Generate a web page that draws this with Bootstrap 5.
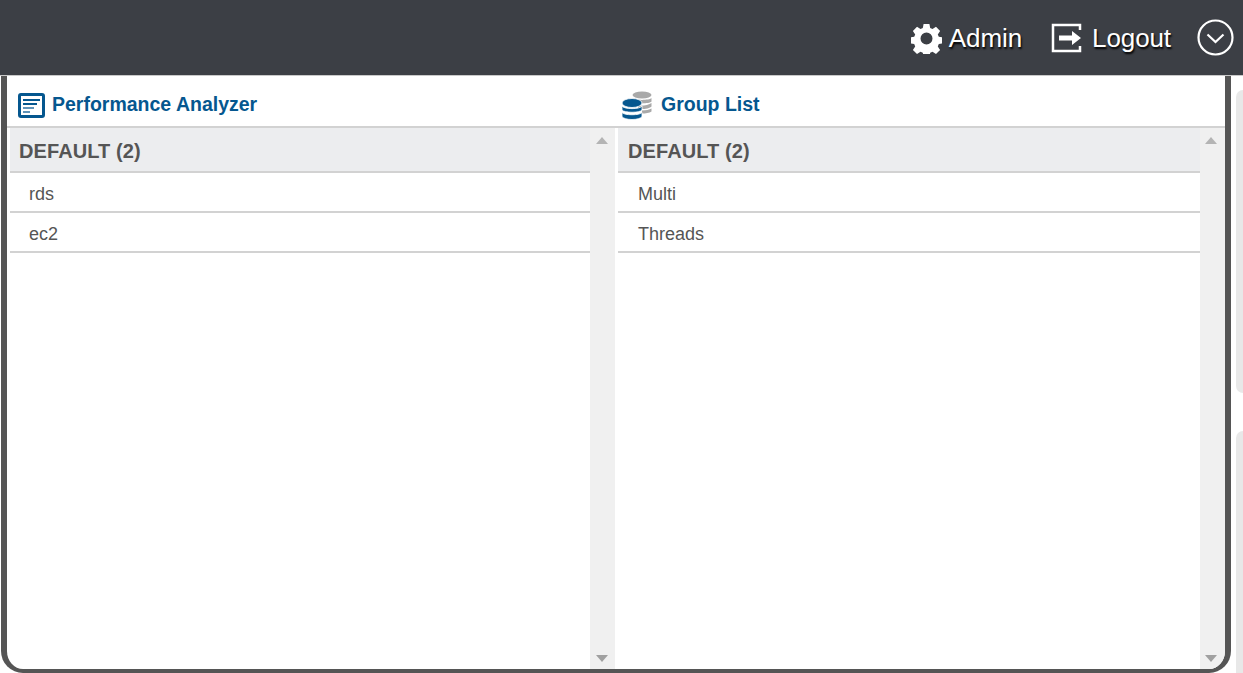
<!DOCTYPE html>
<html lang="en">
<head>
<meta charset="utf-8">
<title>Performance Analyzer</title>
<link rel="stylesheet" href="https://cdn.jsdelivr.net/npm/bootstrap@5.3.0/dist/css/bootstrap.min.css">
<style>
html,body{height:673px;overflow:hidden;background:#fff;font-family:"Liberation Sans",Arial,sans-serif}
.app-root{height:673px}
.top-bar{height:76px;background:#3c3f45;border-bottom:1px solid #c9c9c9;padding:0 9px 0 0;gap:26px;flex:none}
.top-link{color:#fff;font-size:26px;letter-spacing:-.1px;text-decoration:none;text-shadow:1px 2px 2px #000;gap:9px;line-height:30px;padding-top:1px}
.top-link.admin{gap:7px;margin-right:3px}
.stage{flex:1;min-height:0;padding-left:1px}
.frame{width:1230px;height:597px;border:solid #555;border-width:0 6px 4px 6px;border-radius:0 0 22px 22px;overflow:hidden;background:#fff}
.side-strip{flex:1;padding:14px 0 0 5px;gap:38px;min-width:0}
.side-tab{background:#e8e8e8;border-radius:8px 0 0 8px}
.side-tab.first{height:303px}
.side-tab.second{flex:1;margin-bottom:-20px}
.pane-a{width:608px}
.pane-b{flex:1;min-width:0}
.pane-title{height:52px;color:#05578f;font-size:19.5px;font-weight:700;gap:7px;padding-left:11px;border-bottom:2px solid #d2d2d2;padding-top:7px}
.pane-b .pane-title{padding-left:7px;gap:9px}
.title-icon{margin-top:2px;flex:none}
.pane-body{flex:1;min-height:0;padding-left:3px}
.tree{flex:1;min-width:0}
.tree-head{height:45px;background:#ecedef;border-bottom:2px solid #d2d2d2;color:#555;font-size:20px;font-weight:700;letter-spacing:.1px;padding:2px 0 0 9px}
.tree-row{height:40px;border-bottom:2px solid #d2d2d2;color:#555;font-size:18px;padding:4px 0 0 19px}
.pane-b .tree-head{padding-left:10px}
.pane-b .tree-row{padding-left:20px}
.scroll-rail{width:25px;background:#f0f0f0;padding:9px 2px 7px 0}
.pane-b .scroll-rail{padding-right:3px}
.arrow-up,.arrow-down{width:0;height:0;border-left:6px solid transparent;border-right:6px solid transparent}
.arrow-up{border-bottom:7px solid #b4b4b4}
.arrow-down{border-top:7px solid #a0a0a0}
</style>
</head>
<body>
<div class="app-root d-flex flex-column">
  <nav class="top-bar d-flex align-items-center justify-content-end">
    <a class="top-link admin d-flex align-items-center" href="#">
      <svg width="31" height="31" viewBox="0 0 31 31" aria-hidden="true"><path fill="#fff" fill-rule="evenodd" d="M12.6 1h5.800l.8 4.100 2.300 1 3.500-2.300 4.100 4.100-2.300 3.500 1 2.300 4.100.8v5.800l-4.100.8-1 2.300 2.300 3.500-4.100 4.100-3.500-2.300-2.300 1-.8 4.100h-5.800l-.8-4.100-2.300-1-3.500 2.300-4.100-4.100 2.300-3.500-1-2.300-4.100-.8v-5.800l4.100-.8 1-2.300-2.300-3.500 4.100-4.100 3.500 2.300 2.300-1zM15.500 9.500a6 6 0 1 0 0 12 6 6 0 0 0 0-12z"/></svg>
      <span>Admin</span>
    </a>
    <a class="top-link d-flex align-items-center" href="#">
      <svg width="32" height="30" viewBox="0 0 32 30" aria-hidden="true"><path fill="none" stroke="#fff" stroke-width="2.500" d="M29 7V2H2v26h27v-5"/><path fill="#fff" d="M8 12.500h13V8l9 7-9 7v-4.500H8z"/></svg>
      <span>Logout</span>
    </a>
    <svg width="37" height="37" viewBox="0 0 37 37" aria-hidden="true"><circle cx="18.500" cy="18.500" r="17" fill="none" stroke="#fff" stroke-width="2.200"/><path d="M10.500 15.500l8 7.500 8-7.500" fill="none" stroke="#fff" stroke-width="2.200"/></svg>
  </nav>
  <div class="stage d-flex">
    <main class="frame d-flex flex-shrink-0">
      <section class="pane-a d-flex flex-column">
        <h2 class="pane-title d-flex align-items-center m-0">
          <svg class="title-icon" width="27" height="25" viewBox="0 0 27 25" aria-hidden="true"><rect x="1.500" y="1.500" width="24" height="22" rx="1.500" fill="#fff" stroke="#05578f" stroke-width="3"/><path stroke="#05578f" stroke-width="2" d="M5 7h17M5 11h14"/><path stroke="#5f93b8" stroke-width="2" d="M5 15h11M5 19h7"/></svg>
          <span>Performance Analyzer</span>
        </h2>
        <div class="pane-body d-flex">
          <div class="tree">
            <div class="tree-head d-flex align-items-center">DEFAULT (2)</div>
            <div class="tree-row d-flex align-items-center">rds</div>
            <div class="tree-row d-flex align-items-center">ec2</div>
          </div>
          <div class="scroll-rail d-flex flex-column align-items-center justify-content-between"><i class="arrow-up"></i><i class="arrow-down"></i></div>
        </div>
      </section>
      <section class="pane-b d-flex flex-column">
        <h2 class="pane-title d-flex align-items-center m-0">
          <svg class="title-icon" width="30" height="29" viewBox="0 0 30 29" aria-hidden="true"><g fill="#a9a9a9"><ellipse cx="20" cy="4" rx="9.500" ry="3.500"/><path d="M10.500 7c2 2.500 17 2.500 19 0v3.500c-2 2.500-17 2.500-19 0zM16 14.500c5 .5 11-.5 13.500-2.500v3.500c-1.500 2-8 3-13.500 2.500zM20 19.500c4 0 7.500-1 9.500-2v3c-2 1.500-6 2-9.500 2z"/></g><g fill="#05578f" stroke="#fff" stroke-width=".8"><ellipse cx="10" cy="12" rx="10" ry="4.500"/><path d="M0 15c2 3.500 18 3.500 20 0v4c-2 3-18 3-20 0zM0 21.500c2 3 18 3 20 0v4c-2 4-18 4-20 0z"/></g></svg>
          <span>Group List</span>
        </h2>
        <div class="pane-body d-flex">
          <div class="tree">
            <div class="tree-head d-flex align-items-center">DEFAULT (2)</div>
            <div class="tree-row d-flex align-items-center">Multi</div>
            <div class="tree-row d-flex align-items-center">Threads</div>
          </div>
          <div class="scroll-rail d-flex flex-column align-items-center justify-content-between"><i class="arrow-up"></i><i class="arrow-down"></i></div>
        </div>
      </section>
    </main>
    <aside class="side-strip d-flex flex-column">
      <div class="side-tab first"></div>
      <div class="side-tab second"></div>
    </aside>
  </div>
</div>
<script src="https://cdn.jsdelivr.net/npm/bootstrap@5.3.0/dist/js/bootstrap.bundle.min.js"></script>
</body>
</html>
